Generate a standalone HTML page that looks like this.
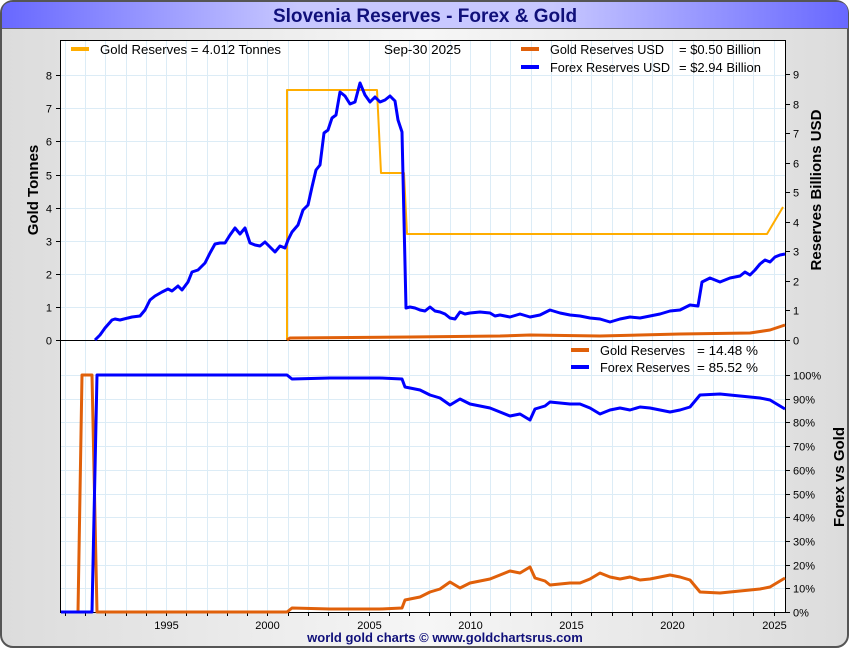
<!DOCTYPE html>
<html><head><meta charset="utf-8"><style>
body{margin:0;width:850px;height:650px;overflow:hidden;background:#fff;font-family:"Liberation Sans",sans-serif}
</style></head><body>
<svg id="s" width="850" height="650" xmlns="http://www.w3.org/2000/svg" font-family="Liberation Sans, sans-serif">
<defs>
<linearGradient id="tb" x1="0" x2="1"><stop offset="0" stop-color="#6868ff"/><stop offset="0.35" stop-color="#c8c8ff"/><stop offset="0.65" stop-color="#c8c8ff"/><stop offset="1" stop-color="#6868ff"/></linearGradient>
<linearGradient id="bg" x1="0" x2="1"><stop offset="0" stop-color="#dcdcdc"/><stop offset="0.5" stop-color="#f6f6f6"/><stop offset="1" stop-color="#dcdcdc"/></linearGradient>
</defs>
<rect x="1" y="1" width="847" height="646" rx="12" fill="url(#bg)" stroke="#555" stroke-width="2"/>
<path d="M2,28 V13 Q2,2 13,2 H837 Q848,2 848,13 V28 Z" fill="url(#tb)"/>
<line x1="2" y1="28.5" x2="848" y2="28.5" stroke="#666"/>
<text x="425" y="22" text-anchor="middle" font-size="19" font-weight="bold" fill="#10107a">Slovenia Reserves - Forex &amp; Gold</text>
<rect x="60" y="40" width="726" height="572" fill="#fff"/>
<g id="grid" stroke="#dcecf6" stroke-width="1"></g>
<rect x="60.5" y="40.5" width="725" height="300" fill="none" stroke="#000"/>
<line x1="60.5" y1="340" x2="60.5" y2="612" stroke="#000"/>
<line x1="785.5" y1="340" x2="785.5" y2="612" stroke="#000"/>
<line x1="60" y1="612.5" x2="786" y2="612.5" stroke="#000"/>
<g id="ticks" font-size="11" fill="#000"></g>
<g id="lines" fill="none" stroke-width="3" stroke-linejoin="round"></g>
<!-- legends -->
<line x1="71" y1="49" x2="89" y2="49" stroke="#ffad00" stroke-width="4"/>
<text x="100" y="54" font-size="13" textLength="181" lengthAdjust="spacingAndGlyphs">Gold Reserves  = 4.012 Tonnes</text>
<text x="384" y="54" font-size="13" textLength="77" lengthAdjust="spacingAndGlyphs">Sep-30  2025</text>
<line x1="521" y1="49" x2="539" y2="49" stroke="#e0600a" stroke-width="4"/>
<text x="550" y="54" font-size="13" textLength="114" lengthAdjust="spacingAndGlyphs">Gold Reserves USD</text><text x="679" y="54" font-size="13" textLength="82" lengthAdjust="spacingAndGlyphs">= $0.50 Billion</text>
<line x1="521" y1="67" x2="539" y2="67" stroke="#0000ff" stroke-width="4"/>
<text x="550" y="72" font-size="13" textLength="120" lengthAdjust="spacingAndGlyphs">Forex Reserves USD</text><text x="679" y="72" font-size="13" textLength="82" lengthAdjust="spacingAndGlyphs">= $2.94 Billion</text>
<line x1="571" y1="350" x2="589" y2="350" stroke="#e0600a" stroke-width="4"/>
<text x="600" y="355" font-size="13" textLength="85" lengthAdjust="spacingAndGlyphs">Gold Reserves</text><text x="697" y="355" font-size="13" textLength="61" lengthAdjust="spacingAndGlyphs">= 14.48 %</text>
<line x1="571" y1="367" x2="589" y2="367" stroke="#0000ff" stroke-width="4"/>
<text x="600" y="372" font-size="13" textLength="90" lengthAdjust="spacingAndGlyphs">Forex Reserves</text><text x="697" y="372" font-size="13" textLength="61" lengthAdjust="spacingAndGlyphs">= 85.52 %</text>
<text transform="translate(38,190) rotate(-90)" text-anchor="middle" font-size="15" font-weight="bold">Gold Tonnes</text>
<text transform="translate(821,190) rotate(-90)" text-anchor="middle" font-size="15" font-weight="bold">Reserves Billions USD</text>
<text transform="translate(844,477) rotate(-90)" text-anchor="middle" font-size="15" font-weight="bold">Forex vs Gold</text>
<text x="445" y="642" text-anchor="middle" font-size="13" font-weight="bold" fill="#10107a">world gold charts © www.goldchartsrus.com</text>
</svg>
<script>
var NS="http://www.w3.org/2000/svg";
function el(p,t,a,txt){var e=document.createElementNS(NS,t);for(var k in a)e.setAttribute(k,a[k]);if(txt!=null)e.textContent=txt;document.getElementById(p).appendChild(e);return e;}
function X(y){return 166+(y-1995)*20.25;}
for(var y=1990;y<=2025;y++){var x=Math.round(X(y))+.5;if(x>60&&x<785)el("grid","line",{x1:x,y1:41,x2:x,y2:612});
 el("ticks","line",{x1:x,y1:612,x2:x,y2:616,stroke:"#000"});
 if(y%5==0&&y>=1995)el("ticks","text",{x:x,y:629,"text-anchor":"middle"},y);}
for(var i=0;i<=8;i++){var yy=Math.round(340-i*33.1)+.5;if(i>0)el("grid","line",{x1:61,y1:yy,x2:785,y2:yy});
 el("ticks","line",{x1:56,y1:yy,x2:60,y2:yy,stroke:"#000"});el("ticks","text",{x:52,y:yy+4,"text-anchor":"end"},i);}
for(var i=0;i<=9;i++){var yy=Math.round(340-i*29.55)+.5;el("ticks","line",{x1:786,y1:yy,x2:790,y2:yy,stroke:"#000"});el("ticks","text",{x:793,y:yy+4},i);}
for(var i=0;i<=10;i++){var yy=Math.round(612-i*23.7)+.5;if(i>0)el("grid","line",{x1:61,y1:yy,x2:785,y2:yy});
 el("ticks","line",{x1:786,y1:yy,x2:790,y2:yy,stroke:"#000"});el("ticks","text",{x:793,y:yy+4},(i*10)+"%");}
function pl(pts,c,w){el("lines","polyline",{points:pts.map(function(p){return p.join(",")}).join(" "),stroke:c,"stroke-width":w||3});}
pl([[287,340],[287,90],[377,90],[381,173],[404,173],[407,234],[767,234],[783,207]],"#ffad00",2);
var fx=[[95,340],[100,335],[105,328],[112,320],[115,319],[120,320],[128,318],[132,317],[140,316],[145,310],[150,300],[155,296],[162,292],[168,289],[172,291],[178,286],[182,290],[188,282],[192,272],[198,270],[205,263],[210,253],[215,244],[220,243],[225,243],[230,235],[235,228],[240,234],[245,228],[250,243],[255,245],[260,246],[265,242],[270,247],[275,252],[280,246],[285,248],[288,240],[292,232],[298,225],[303,210],[308,205],[312,187],[316,170],[320,165],[324,133],[328,130],[332,118],[336,115],[340,92],[345,96],[350,104],[355,102],[360,83],[365,95],[370,102],[375,97],[380,102],[385,100],[390,96],[395,101],[398,120],[402,132],[406,308],[410,307],[415,308],[420,310],[425,311],[430,307],[435,311],[440,312],[445,314],[450,318],[455,319],[460,312],[465,314],[470,313],[480,312],[490,313],[495,316],[500,315],[510,317],[520,314],[530,317],[540,315],[550,310],[560,313],[570,315],[580,316],[590,318],[600,319],[610,322],[620,319],[630,317],[640,318],[650,316],[660,314],[670,311],[680,310],[690,305],[698,306],[702,282],[710,278],[720,282],[730,278],[740,276],[745,272],[750,275],[755,270],[760,264],[765,260],[770,262],[775,257],[780,255],[785,254]];
pl([[287,340],[290,338],[410,337],[500,336],[530,335],[600,336],[680,334],[750,333],[770,330],[785,325]],"#e0600a");
pl(fx,"#0000ff");
var fp=[[287,375],[292,379],[330,378],[380,378],[402,379],[405,387],[420,390],[430,395],[440,398],[450,405],[460,399],[470,404],[480,406],[490,408],[500,412],[510,416],[520,414],[530,420],[535,409],[545,406],[550,402],[560,403],[570,404],[580,404],[590,408],[600,414],[610,410],[620,408],[630,410],[640,407],[650,408],[660,410],[670,412],[680,410],[690,407],[700,395],[720,394],[740,396],[760,398],[770,400],[785,409]];
var gp=[[61,612],[78,612],[82,375],[92,375],[97,612],[287,612]].concat(fp.map(function(p){return [p[0],987-p[1]]}));
pl(gp,"#e0600a");
pl([[61,612],[92,612],[97,375],[287,375]].concat(fp),"#0000ff");
</script>
</body></html>
